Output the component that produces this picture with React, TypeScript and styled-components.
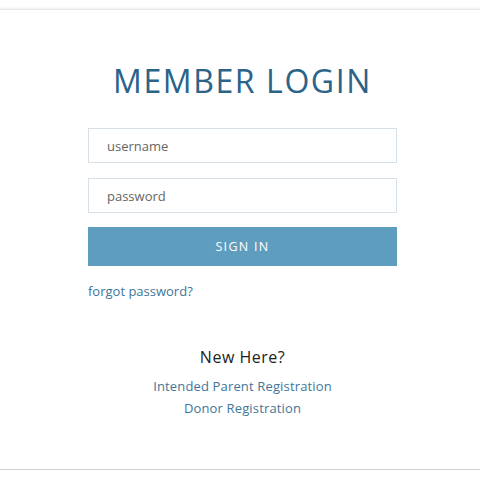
import React from "react";
import styled, { createGlobalStyle } from "styled-components";

const Global = createGlobalStyle`
  html, body { margin: 0; padding: 0; background: #ffffff; }
  body { padding-top: 9px; font-family: "Open Sans", "Liberation Sans", sans-serif; }
`;

const Card = styled.div`
  background: #fff;
  height: 461px;
  border-top: 1px solid #e6e6e6;
  border-bottom: 1px solid #cfcfcf;
  box-shadow: 0 -1px 2px rgba(0,0,0,0.06), 0 3px 4px rgba(0,0,0,0.14);
  display: flex;
  flex-direction: column;
  align-items: center;
  padding: 57px 0 0 5px;
  box-sizing: border-box;
`;

const Title = styled.h1`
  margin: 0;
  font-family: "Open Sans", sans-serif;
  font-weight: 400;
  font-size: 32px;
  line-height: 28px;
  letter-spacing: 1.6px;
  color: #2b6389;
`;

const Form = styled.form`
  width: 309px;
  margin-top: 33px;
  display: flex;
  flex-direction: column;
  gap: 15px;
`;

const Input = styled.input`
  box-sizing: border-box;
  width: 100%;
  height: 35px;
  border: 1px solid #d6e0e6;
  padding: 0 18px;
  font-family: "Open Sans", sans-serif;
  font-size: 13px;
  color: #555;
  outline: none;
  &::placeholder { color: #666; }
`;

const Button = styled.button`
  height: 39px;
  margin-top: -1px;
  border: none;
  background: #5f9dbe;
  color: #fff;
  font-family: "Open Sans", sans-serif;
  font-size: 12.5px;
  letter-spacing: 1.3px;
`;

const Forgot = styled.a`
  margin-top: 1px;
  color: #3f7699;
  font-size: 13px;
  text-decoration: none;
  align-self: flex-start;
`;

const NewHere = styled.div`
  margin-top: 46px;
  font-size: 16px;
  letter-spacing: 0.5px;
  color: #222;
`;

const Links = styled.div`
  margin-top: 9px;
  display: flex;
  flex-direction: column;
  align-items: center;
  gap: 4px;
`;

const RegLink = styled.a`
  color: #3f7699;
  font-size: 13px;
  letter-spacing: 0.15px;
  text-decoration: none;
  line-height: 18px;
`;

export default function App() {
  return (
    <>
      <Global />
      <Card>
        <Title>MEMBER LOGIN</Title>
        <Form onSubmit={(e) => e.preventDefault()}>
          <Input placeholder="username" />
          <Input placeholder="password" type="password" />
          <Button type="submit">SIGN IN</Button>
          <Forgot href="#">forgot password?</Forgot>
        </Form>
        <NewHere>New Here?</NewHere>
        <Links>
          <RegLink href="#">Intended Parent Registration</RegLink>
          <RegLink href="#">Donor Registration</RegLink>
        </Links>
      </Card>
    </>
  );
}
